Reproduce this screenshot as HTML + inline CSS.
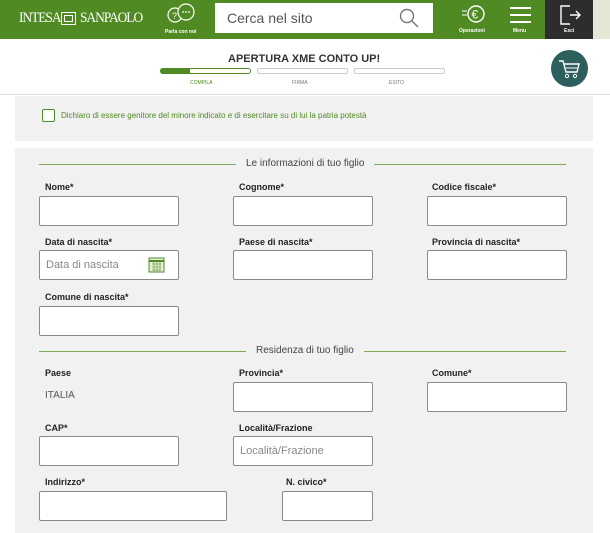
<!DOCTYPE html>
<html><head><meta charset="utf-8"><style>
*{margin:0;padding:0;box-sizing:border-box}
body{width:610px;height:533px;overflow:hidden;background:#fff;font-family:"Liberation Sans",Arial,sans-serif;position:relative}
.a{position:absolute}
.hdr{left:0;top:0;width:610px;height:39px;background:#4f8a23}
.lbl{position:absolute;font-size:9px;font-weight:bold;color:#222}
.in{position:absolute;background:#fff;border:1px solid #8a8a8a;border-radius:2px;height:30px;font-size:11px;color:#888;padding-left:6px;line-height:28px}
.sec{position:absolute;left:39px;width:527px;height:1px;background:#7bab5a}
.st{position:absolute;background:#f1f1f1;padding:0 10px;font-size:10px;color:#444;top:-6px}
.logo{position:absolute;top:10px;font-family:'Liberation Serif',serif;color:#fff;font-size:15px;letter-spacing:-1.2px;transform:scaleX(.9);transform-origin:left}
</style></head><body>
<div class="a hdr"></div>
<div class="logo" style="left:19px">INTESA</div>
<div class="a" style="left:61px;top:12px;width:15px;height:13px;border:1px solid #fff"></div>
<div class="a" style="left:64px;top:15px;width:9px;height:7px;border:1px solid #fff"></div>
<div class="logo" style="left:80px">SANPAOLO</div>
<svg class="a" style="left:164px;top:2px" width="36" height="26" viewBox="0 0 36 26"><circle cx="11" cy="13" r="7" fill="none" stroke="#fff" stroke-width="1.2"/><text x="8" y="17" fill="#fff" font-size="9" font-family="Liberation Sans">?</text><circle cx="22" cy="10" r="8" fill="#4f8a23" stroke="#fff" stroke-width="1.2"/><circle cx="19" cy="10" r=".9" fill="#fff"/><circle cx="22" cy="10" r=".9" fill="#fff"/><circle cx="25" cy="10" r=".9" fill="#fff"/></svg>
<div class="a" style="left:165px;top:29px;font-size:5px;color:#fff;font-weight:bold">Parla con noi</div>
<div class="a" style="left:215px;top:3px;width:218px;height:30px;background:#fff;font-size:14px;color:#555;padding:7px 12px">Cerca nel sito</div>
<svg class="a" style="left:398px;top:7px" width="22" height="22"><circle cx="9" cy="9" r="6.5" fill="none" stroke="#777" stroke-width="1.4"/><line x1="14" y1="14" x2="20" y2="20" stroke="#777" stroke-width="1.4"/></svg>
<svg class="a" style="left:461px;top:3px" width="26" height="22"><circle cx="15" cy="11" r="8" fill="none" stroke="#fff" stroke-width="1.4"/><text x="10.5" y="15.5" fill="#fff" font-size="12" font-family="Liberation Sans">€</text><line x1="1" y1="8" x2="6" y2="8" stroke="#fff"/><line x1="1" y1="12" x2="6" y2="12" stroke="#fff"/></svg>
<div class="a" style="left:459px;top:28px;font-size:5px;color:#fff;font-weight:bold">Operazioni</div>
<div class="a" style="left:510px;top:7px;width:21px;height:2px;background:#fff;box-shadow:0 7px #fff,0 14px #fff"></div>
<div class="a" style="left:513px;top:28px;font-size:5px;color:#fff;font-weight:bold">Menu</div>
<div class="a" style="left:545px;top:0;width:48px;height:39px;background:#2d2d2d"></div>
<svg class="a" style="left:558px;top:4px" width="24" height="22"><path d="M12 2H3v18h9M12 11h10M18 7l4 4-4 4" fill="none" stroke="#fff" stroke-width="1.4"/></svg>
<div class="a" style="left:564px;top:28px;font-size:5px;color:#fff;font-weight:bold">Esci</div>
<div class="a" style="left:593px;top:0;width:17px;height:39px;background:#e6e6d6"></div>
<div class="a" style="left:0;top:39px;width:610px;height:56px;background:#fff;border-bottom:1px solid #ddd"></div>
<div class="a" style="left:228px;top:53px;font-size:11px;font-weight:bold;color:#333">APERTURA XME CONTO UP!</div>
<div class="a" style="left:160px;top:68px;width:91px;height:6px;border:1px solid #4f8a23;border-radius:3px"></div>
<div class="a" style="left:160px;top:68px;width:30px;height:6px;background:#4f8a23;border-radius:3px 0 0 3px"></div>
<div class="a" style="left:257px;top:68px;width:91px;height:6px;border:1px solid #ccc;border-radius:2px"></div>
<div class="a" style="left:354px;top:68px;width:91px;height:6px;border:1px solid #ccc;border-radius:2px"></div>
<div class="a" style="left:190px;top:80px;font-size:5px;color:#4f8a23">COMPILA</div>
<div class="a" style="left:292px;top:80px;font-size:5px;color:#777">FIRMA</div>
<div class="a" style="left:389px;top:80px;font-size:5px;color:#777">ESITO</div>
<div class="a" style="left:551px;top:50px;width:37px;height:37px;border-radius:50%;background:#2c5f5d"></div>
<svg class="a" style="left:558px;top:58px" width="24" height="22"><path d="M1 3h4l3 11h11l2-8H6" fill="none" stroke="#fff" stroke-width="1.4"/><line x1="8" y1="10" x2="19" y2="10" stroke="#fff"/><circle cx="9" cy="18" r="1.6" fill="none" stroke="#fff"/><circle cx="17" cy="18" r="1.6" fill="none" stroke="#fff"/></svg>
<div class="a" style="left:15px;top:96px;width:578px;height:45px;background:#f1f1f1"></div>
<div class="a" style="left:42px;top:109px;width:13px;height:13px;border:1.5px solid #4f8a23;border-radius:2px;background:#fff"></div>
<div class="a" style="left:61px;top:111px;font-size:8px;color:#4f8a23">Dichiaro di essere genitore del minore indicato e di esercitare su di lui la patria potestà</div>
<div class="a" style="left:15px;top:148px;width:578px;height:385px;background:#f1f1f1"></div>
<div class="sec" style="top:164px"><div class="st" style="left:197px">Le informazioni di tuo figlio</div></div>
<div class="lbl" style="left:45px;top:182px">Nome*</div>
<div class="lbl" style="left:239px;top:182px">Cognome*</div>
<div class="lbl" style="left:432px;top:182px">Codice fiscale*</div>
<div class="in" style="left:39px;top:196px;width:140px"></div>
<div class="in" style="left:233px;top:196px;width:140px"></div>
<div class="in" style="left:427px;top:196px;width:140px"></div>
<div class="lbl" style="left:45px;top:237px">Data di nascita*</div>
<div class="lbl" style="left:239px;top:237px">Paese di nascita*</div>
<div class="lbl" style="left:432px;top:237px">Provincia di nascita*</div>
<div class="in" style="left:39px;top:250px;width:140px">Data di nascita</div>
<svg class="a" style="left:148px;top:256px" width="17" height="17"><rect x="1" y="2" width="15" height="14" fill="#e6f0d8" stroke="#4f8a23"/><line x1="1" y1="5" x2="16" y2="5" stroke="#4f8a23" stroke-width="2"/><path d="M4 8h9M4 11h9M4 14h9M6 6v9M9 6v9M12 6v9" stroke="#4f8a23" stroke-width=".6"/></svg>
<div class="in" style="left:233px;top:250px;width:140px"></div>
<div class="in" style="left:427px;top:250px;width:140px"></div>
<div class="lbl" style="left:45px;top:292px">Comune di nascita*</div>
<div class="in" style="left:39px;top:306px;width:140px"></div>
<div class="sec" style="top:351px"><div class="st" style="left:207px">Residenza di tuo figlio</div></div>
<div class="lbl" style="left:45px;top:368px">Paese</div>
<div class="lbl" style="left:239px;top:368px">Provincia*</div>
<div class="lbl" style="left:432px;top:368px">Comune*</div>
<div class="a" style="left:45px;top:390px;font-size:10px;color:#555">ITALIA</div>
<div class="in" style="left:233px;top:382px;width:140px"></div>
<div class="in" style="left:427px;top:382px;width:140px"></div>
<div class="lbl" style="left:45px;top:423px">CAP*</div>
<div class="lbl" style="left:239px;top:423px">Località/Frazione</div>
<div class="in" style="left:39px;top:436px;width:140px"></div>
<div class="in" style="left:233px;top:436px;width:140px">Località/Frazione</div>
<div class="lbl" style="left:45px;top:477px">Indirizzo*</div>
<div class="lbl" style="left:286px;top:477px">N. civico*</div>
<div class="in" style="left:39px;top:491px;width:188px"></div>
<div class="in" style="left:282px;top:491px;width:91px"></div>
</body></html>
